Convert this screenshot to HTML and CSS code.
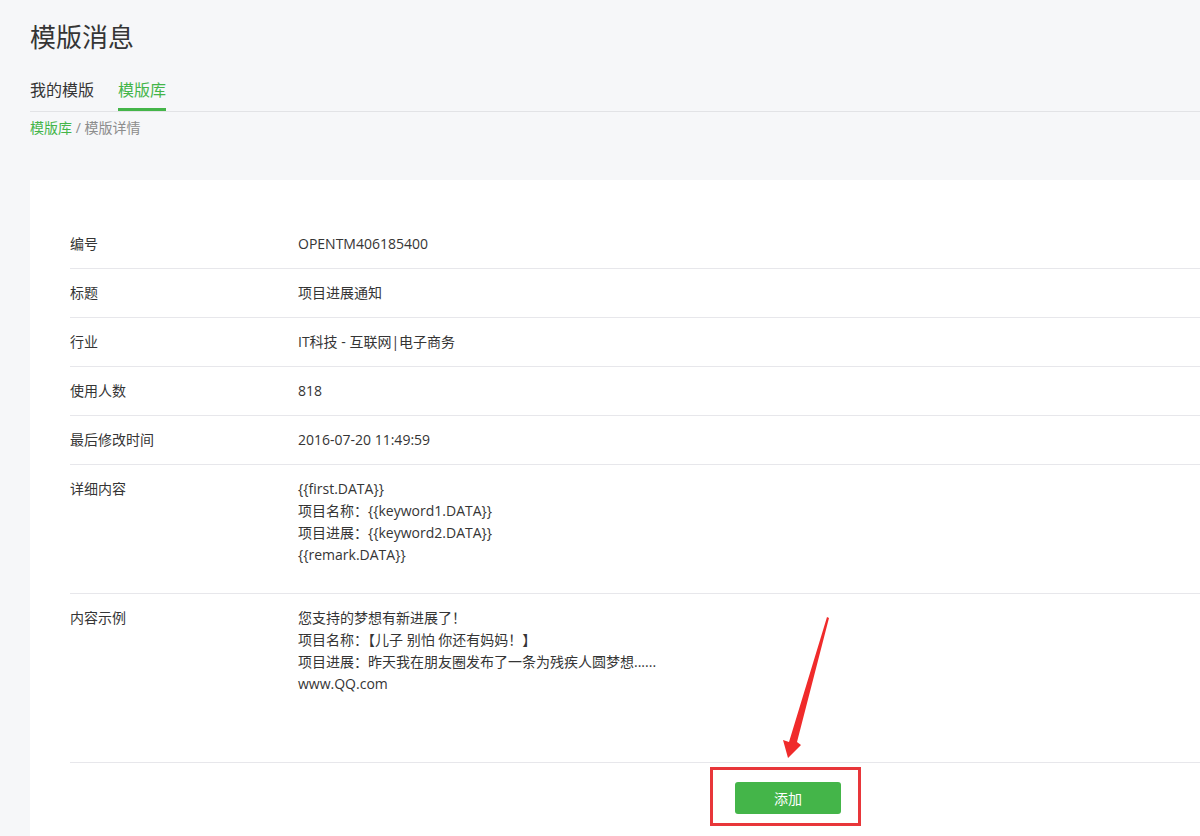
FILE: index.html
```html
<!DOCTYPE html>
<html lang="zh-CN">
<head>
<meta charset="utf-8">
<title>模版消息</title>
<link rel="stylesheet" href="styles.css">
</head>
<body>
<div class="page">
  <h1 class="title">模版消息</h1>
  <div class="tabs">
    <a class="tab">我的模版</a>
    <a class="tab active">模版库</a>
  </div>
  <div class="crumb"><span class="crumb-link">模版库</span><span class="crumb-sep"> / </span><span class="crumb-cur">模版详情</span></div>
  <div class="card">
    <div class="row"><div class="label">编号</div><div class="value">OPENTM406185400</div></div>
    <div class="row"><div class="label">标题</div><div class="value">项目进展通知</div></div>
    <div class="row"><div class="label">行业</div><div class="value">IT科技 - 互联网|电子商务</div></div>
    <div class="row"><div class="label">使用人数</div><div class="value">818</div></div>
    <div class="row"><div class="label">最后修改时间</div><div class="value">2016-07-20 11:49:59</div></div>
    <div class="row row-detail"><div class="label">详细内容</div><div class="value">{{first.DATA}}<br>项目名称：{{keyword1.DATA}}<br>项目进展：{{keyword2.DATA}}<br>{{remark.DATA}}</div></div>
    <div class="row row-sample"><div class="label">内容示例</div><div class="value">您支持的梦想有新进展了！<br>项目名称：【儿子 别怕 你还有妈妈！】<br>项目进展：昨天我在朋友圈发布了一条为残疾人圆梦想......<br>www.QQ.com</div></div>
    <div class="actions"><button class="btn">添加</button></div>
  </div>
</div>
<svg class="annot" width="1200" height="836" viewBox="0 0 1200 836">
  <rect x="711.5" y="768.5" width="148" height="56" fill="none" stroke="#e8363a" stroke-width="3"/>
  <polygon points="827,617 829,618 797,742 801,745 788,758 783,740 789,742" fill="#f02b2b"/>
</svg>
</body>
</html>
```
FILE: styles.css
```css
html, body {
  margin: 0;
  padding: 0;
  background: #f6f7f9;
  overflow: hidden;
  height: 836px;
  font-family: "Open Sans", "Noto Sans CJK SC", sans-serif;
  color: #353535;
}
.page {
  padding-left: 30px;
}
.title {
  margin: 19px 0 0;
  font-size: 26px;
  line-height: 36px;
  font-weight: 400;
  color: #353535;
}
.tabs {
  margin-top: 24px;
  display: flex;
  gap: 24px;
  border-bottom: 1px solid #e2e3e6;
}
.tab {
  font-size: 16px;
  line-height: 22px;
  padding-bottom: 7px;
  border-bottom: 3px solid transparent;
  color: #353535;
}
.tab.active {
  color: #44b549;
  border-bottom-color: #44b549;
}
.crumb {
  margin-top: 6px;
  font-size: 14px;
  line-height: 20px;
  color: #8d8d8d;
}
.crumb-link {
  color: #44b549;
}
.card {
  margin-top: 42px;
  background: #fff;
  padding: 40px 0 0 40px;
  height: 616px;
}
.row {
  display: flex;
  font-size: 14px;
  line-height: 22px;
  padding: 13px 0;
  border-bottom: 1px solid #e7e7eb;
}
.label {
  width: 228px;
  flex: none;
  color: #353535;
}
.value {
  color: #353535;
}
.row-detail {
  padding-bottom: 27px;
}
.row-sample {
  padding-bottom: 67px;
}
.actions {
  padding: 19px 0 0 665px;
}
.btn {
  width: 106px;
  height: 32px;
  border: none;
  border-radius: 3px;
  background: #44b549;
  color: #fff;
  font-family: inherit;
  font-size: 14px;
  padding: 0;
}
.annot {
  position: absolute;
  left: 0;
  top: 0;
  pointer-events: none;
}
```
